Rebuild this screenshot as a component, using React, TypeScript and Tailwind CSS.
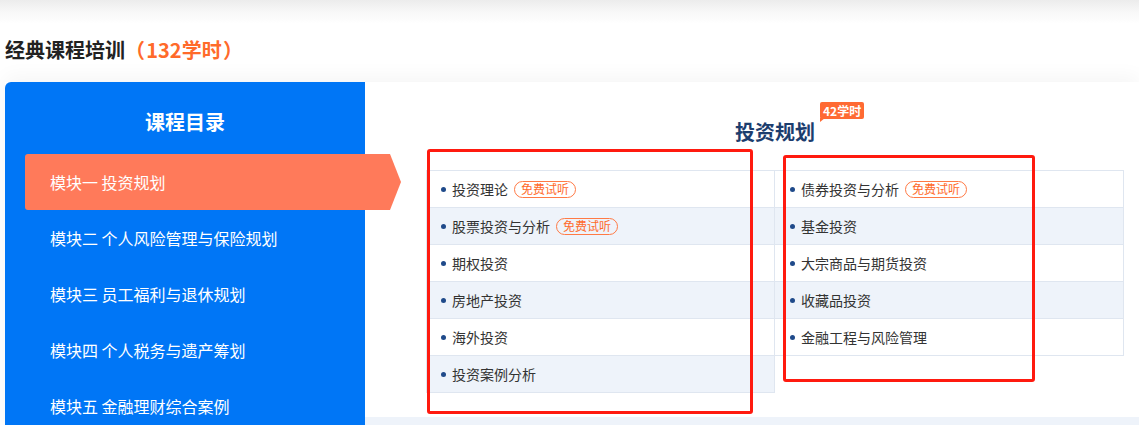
import React from "react";

const modules = [
  "模块一 投资规划",
  "模块二 个人风险管理与保险规划",
  "模块三 员工福利与退休规划",
  "模块四 个人税务与遗产筹划",
  "模块五 金融理财综合案例",
];

type Lesson = { name: string; free?: boolean };

const leftLessons: Lesson[] = [
  { name: "投资理论", free: true },
  { name: "股票投资与分析", free: true },
  { name: "期权投资" },
  { name: "房地产投资" },
  { name: "海外投资" },
  { name: "投资案例分析" },
];

const rightLessons: Lesson[] = [
  { name: "债券投资与分析", free: true },
  { name: "基金投资" },
  { name: "大宗商品与期货投资" },
  { name: "收藏品投资" },
  { name: "金融工程与风险管理" },
];

function LessonTable({ items, first }: { items: Lesson[]; first?: boolean }) {
  return (
    <div
      className={`w-[349px] border-t border-r border-[#dfe6f0] ${
        first ? "border-l" : ""
      }`}
    >
      {items.map((item, i) => (
        <div
          key={item.name}
          className={`flex h-[37px] items-center border-b border-[#dfe6f0] ${
            first ? "pl-[14px]" : "pl-[15px]"
          } ${i % 2 === 1 ? "bg-[#eef3fa]" : "bg-white"}`}
        >
          <span className="h-[5px] w-[5px] rounded-full bg-[#1f4a8a]" />
          <span className="ml-[6px] text-[14px] text-[#333]">{item.name}</span>
          {item.free && (
            <span className="ml-[6px] flex h-[17px] items-center rounded-full border border-[#ff7a45] px-[6px] text-[12px] leading-none text-[#ff6a2a]">
              免费试听
            </span>
          )}
        </div>
      ))}
    </div>
  );
}

export default function App() {
  return (
    <main
      className="relative h-[425px] w-[1139px] overflow-hidden bg-white"
      style={{ fontFamily: '"Noto Sans CJK SC", "Noto Sans", sans-serif' }}
    >
      <div className="h-[24px] bg-gradient-to-b from-[#ececec] via-[#f8f8f8] to-white" />

      <h2 className="h-[58px] pl-[5px] pt-[13px] text-[20px] font-bold leading-[26px] text-[#222]">
        经典课程培训
        <span className="text-[#ff6a2a]">（{"\u200a"}132学时{"\u200a"}）</span>
      </h2>

      <section className="ml-[5px] flex shadow-[0_-6px_18px_rgba(0,0,0,0.04)]">
        <aside className="relative z-10 h-[343px] w-[360px] shrink-0 rounded-tl-[6px] bg-[#0076f6]">
          <h3 className="pt-[26px] text-center text-[20px] font-bold leading-[28px] text-white">
            课程目录
          </h3>
          <ul className="mt-[18px]">
            {modules.map((m, i) => (
              <li key={m} className="h-[56px]">
                {i === 0 ? (
                  <div
                    className="ml-[20px] flex h-[56px] w-[376px] items-center rounded-l-[3px] bg-[#ff7a5a] pl-[25px] text-[16px] text-white"
                    style={{
                      clipPath:
                        "polygon(0 0, 365px 0, 100% 50%, 365px 100%, 0 100%)",
                    }}
                  >
                    {m}
                  </div>
                ) : (
                  <div className="ml-[20px] flex h-[56px] items-center pl-[25px] text-[16px] text-white">
                    {m}
                  </div>
                )}
              </li>
            ))}
          </ul>
        </aside>

        <div className="flex-1">
          <div className="h-[335px] bg-white pl-[61px]">
            <div className="w-[698px] pt-[36px] text-center">
              <span className="relative inline-block text-[20px] font-bold leading-[28px] text-[#1c3d6e]">
                投资规划
                <span className="absolute left-full top-[-16px] ml-[5px] flex h-[17px] items-center whitespace-nowrap rounded-[2px] bg-[#ff6a33] px-[3px] text-[12px] font-bold leading-none text-white">
                  42学时
                  <span className="absolute bottom-[-3px] left-0 h-0 w-0 border-r-[5px] border-t-[4px] border-r-transparent border-t-[#ff6a33]" />
                </span>
              </span>
            </div>
            <div className="mt-[24px] flex items-start">
              <LessonTable items={leftLessons} first />
              <LessonTable items={rightLessons} />
            </div>
          </div>
          <div className="h-[20px] bg-[#eef3fa]" />
        </div>
      </section>

      <div className="pointer-events-none absolute left-[427px] top-[149px] h-[265px] w-[326px] rounded-[3px] border-[3px] border-[#ff1a0f]" />
      <div className="pointer-events-none absolute left-[783px] top-[155px] h-[227px] w-[252px] rounded-[3px] border-[3px] border-[#ff1a0f]" />
    </main>
  );
}
